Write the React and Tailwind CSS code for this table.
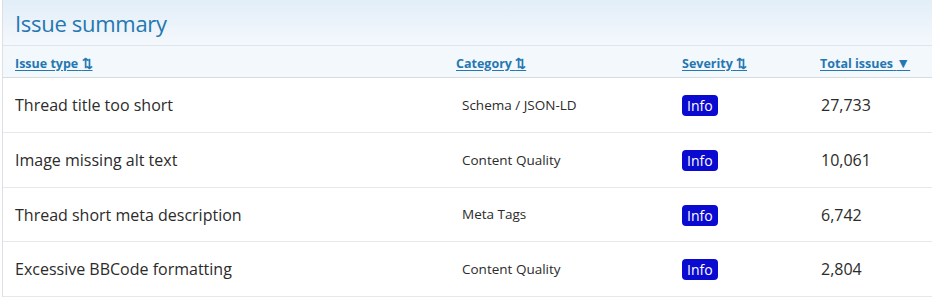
import React from 'react';

const rows = [
    { type: 'Thread title too short', category: 'Schema / JSON-LD', severity: 'Info', total: '27,733' },
    { type: 'Image missing alt text', category: 'Content Quality', severity: 'Info', total: '10,061' },
    { type: 'Thread short meta description', category: 'Meta Tags', severity: 'Info', total: '6,742' },
    { type: 'Excessive BBCode formatting', category: 'Content Quality', severity: 'Info', total: '2,804' },
];

const cols = 'grid grid-cols-[441px_226px_138px_1fr]';

const SortHeader = ({ label, arrow, big }) => (
    <a href="#" className="text-[12.5px] font-bold text-[#2577b1] underline underline-offset-2 whitespace-nowrap">
        {label} <span className={big ? 'text-[14px]' : ''}>{arrow}</span>
    </a>
);

export default function App() {
    return (
        <div className="w-[932px] h-[300px] bg-white overflow-hidden font-['Open_Sans',sans-serif]">
            <div className="ml-[2px] border-l border-[#dcdfe3] w-[960px]">
                {/* Title bar */}
                <div className="h-[46px] flex items-center px-[12px] bg-gradient-to-b from-[#e2eef8] to-[#f4f8fc] border-b border-[#dde6ee]">
                    <h2 className="text-[22px] leading-none text-[#2577b1] tracking-[-0.3px]">Issue summary</h2>
                </div>

                {/* Column header */}
                <div className={`${cols} h-[32px] items-center px-[12px] bg-[#f2f8fc] border-b border-[#d6dbe0]`}>
                    <div><SortHeader label="Issue type" arrow="⇅" /></div>
                    <div><SortHeader label="Category" arrow="⇅" /></div>
                    <div><SortHeader label="Severity" arrow="⇅" /></div>
                    <div><SortHeader label="Total issues" arrow="▼" big /></div>
                </div>

                {rows.map((r, i) => (
                    <div key={r.type} className={`${cols} ${i === 2 ? 'h-[54px]' : 'h-[55px]'} items-center px-[12px] border-b border-[#e6e8eb]`}>
                        <div className="text-[16px] text-[#2b2b2b]">{r.type}</div>
                        <div className="pl-[6px] text-[13.5px] text-[#2b2b2b]">{r.category}</div>
                        <div>
                            <span className="inline-block px-[5px] rounded-[4px] bg-[#0a0ad0] text-white text-[14px] leading-[21px]">
                                {r.severity}
                            </span>
                        </div>
                        <div className="pl-[1px] text-[16px] text-[#2b2b2b]">{r.total}</div>
                    </div>
                ))}
            </div>
        </div>
    );
}
